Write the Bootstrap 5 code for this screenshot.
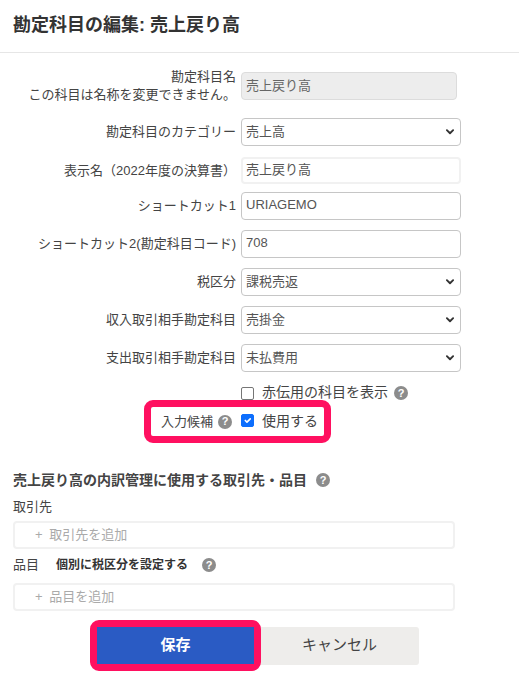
<!DOCTYPE html>
<html lang="ja">
<head>
<meta charset="utf-8">
<title>勘定科目の編集</title>
<link href="https://cdn.jsdelivr.net/npm/bootstrap@5.3.0/dist/css/bootstrap.min.css" rel="stylesheet">
<style>
html,body{height:691px;overflow:hidden;background:#fff}
body{font-family:"Liberation Sans","Noto Sans CJK JP",sans-serif;font-size:13px;color:#444}
.head-bar{height:53px;border-bottom:1px solid #e6e6e6;padding:0 13px 2px;display:flex;align-items:center}
.head-bar h1{font-size:18px;font-weight:700;margin:0;color:#333;line-height:1}
.form-area{padding-top:19px}
.line{display:flex;align-items:center;height:28px}
.line-short{height:27px}
.lab{width:236px;text-align:right;font-size:13px;line-height:18px;flex:none}
.lab-sub{display:block}
.ctl{margin-left:5px;width:220px;flex:none}
.ctl .form-control,.ctl .form-select,.wide-input{height:28px;min-height:28px;font-size:13px;color:#555;padding:0 4px 3px;border:1px solid #c6c6c6;border-radius:4px;box-shadow:none;line-height:20px;background-color:#fff}
.ctl .form-select{padding:1px 20px 2px 4px;background-size:12px 10px;background-position:right 4px center;background-image:url("data:image/svg+xml,%3csvg xmlns='http://www.w3.org/2000/svg' viewBox='0 0 16 16'%3e%3cpath fill='none' stroke='%23333' stroke-linecap='round' stroke-linejoin='round' stroke-width='3' d='m3 5 5 5 5-5'/%3e%3c/svg%3e")}
.ctl .soft{height:27px;min-height:27px;padding:0 3px 4px}
.ctl .soft,.wide-input{border:2px solid #f1f1f1}
.ctl .form-control:disabled{background:#ededed;border-color:#dcdcdc;color:#666;width:216px}
.gap-a{margin-top:18px}.gap-b{margin-top:11px}.gap-c{margin-top:8px}.gap-d{margin-top:10px}
.help{display:inline-flex;align-items:center;justify-content:center;width:14px;height:14px;border-radius:50%;background:#8c8c8c;color:#fff;font-size:11px;font-weight:700;line-height:1;flex:none}
.check-line{display:flex;align-items:center;margin-left:241px;margin-top:12px;height:18px}
.check-line .form-check-input,.marker .form-check-input{width:13px;height:13px;margin:0;border:1px solid #767676;border-radius:2px;flex:none}
.marker .form-check-input:checked{background-color:#0d6efd;border-color:#0d6efd}
.marker .form-check-input{margin-top:-2px}
.opt{font-size:14px;margin:-2px 0 0 8px;line-height:18px}
.check-line .help{margin-left:6px}
.marker{display:flex;align-items:center;width:187px;height:43px;margin:-2px 0 0 144px;border:7px solid #ff1060;border-radius:9px;padding-left:10px}
.marker .cap{font-size:13px}
.marker .help{margin:0 9px 0 5px}
.sec-title{font-size:14px;font-weight:700;color:#444;margin:27px 0 0 13px;display:flex;align-items:center;line-height:20px}
.sec-title .help{margin-left:9px}
.sub-lab{margin:8px 0 0 13px;line-height:18px;color:#444}
.wide-input{display:block;width:442px;margin:5px 0 0 13px;color:#aaa;padding:0 20px 1px}
.wide-input.lower{margin-top:9px}
.wide-input::placeholder{color:#aaa;opacity:1;word-spacing:3px}
.sub-row{display:flex;align-items:center;margin:7px 0 0 13px;line-height:18px}
.sub-row b{font-size:12px;font-weight:700;color:#333;margin-left:17px}
.sub-row .help{margin-left:14px}
.act-row{display:flex;align-items:center;margin:9px 0 0 90px}
.ring{border:7px solid #ff1060;border-radius:9px;flex:none;z-index:1}
.save-btn{width:157px;height:37px;background:#2a5bc4;border:0;border-radius:0;color:#fff;font-size:15px;font-weight:700;padding:0;display:block}
.cancel-btn{width:165px;height:38px;margin-left:-7px;background:#eeedeb;border:0;border-radius:0 3px 3px 0;color:#444;font-size:15px;padding:0 0 0 6px}
</style>
</head>
<body>
<div class="head-bar"><h1>勘定科目の編集: 売上戻り高</h1></div>
<form class="form-area">
  <div class="line">
    <div class="lab">勘定科目名<span class="lab-sub">この科目は名称を変更できません。</span></div>
    <div class="ctl"><input class="form-control" value="売上戻り高" disabled></div>
  </div>
  <div class="line gap-a">
    <div class="lab">勘定科目のカテゴリー</div>
    <div class="ctl"><select class="form-select"><option>売上高</option></select></div>
  </div>
  <div class="line line-short gap-b">
    <div class="lab">表示名（2022年度の決算書）</div>
    <div class="ctl"><input class="form-control soft" value="売上戻り高"></div>
  </div>
  <div class="line gap-c">
    <div class="lab">ショートカット1</div>
    <div class="ctl"><input class="form-control" value="URIAGEMO"></div>
  </div>
  <div class="line gap-d">
    <div class="lab">ショートカット2(勘定科目コード)</div>
    <div class="ctl"><input class="form-control" value="708"></div>
  </div>
  <div class="line gap-d">
    <div class="lab">税区分</div>
    <div class="ctl"><select class="form-select"><option>課税売返</option></select></div>
  </div>
  <div class="line gap-d">
    <div class="lab">収入取引相手勘定科目</div>
    <div class="ctl"><select class="form-select"><option>売掛金</option></select></div>
  </div>
  <div class="line gap-d">
    <div class="lab">支出取引相手勘定科目</div>
    <div class="ctl"><select class="form-select"><option>未払費用</option></select></div>
  </div>
  <div class="check-line">
    <input class="form-check-input" type="checkbox" id="aka">
    <label class="opt" for="aka">赤伝用の科目を表示</label>
    <span class="help">?</span>
  </div>
  <div class="marker">
    <span class="cap">入力候補</span>
    <span class="help">?</span>
    <input class="form-check-input" type="checkbox" id="use" checked>
    <label class="opt" for="use">使用する</label>
  </div>
  <div class="sec-title">売上戻り高の内訳管理に使用する取引先・品目<span class="help">?</span></div>
  <div class="sub-lab">取引先</div>
  <input class="form-control wide-input" placeholder="+ 取引先を追加">
  <div class="sub-row">品目<b>個別に税区分を設定する</b><span class="help">?</span></div>
  <input class="form-control wide-input lower" placeholder="+ 品目を追加">
  <div class="act-row">
    <div class="ring"><button type="button" class="btn save-btn">保存</button></div>
    <button type="button" class="btn cancel-btn">キャンセル</button>
  </div>
</form>
<script src="https://cdn.jsdelivr.net/npm/bootstrap@5.3.0/dist/js/bootstrap.bundle.min.js"></script>
</body>
</html>
